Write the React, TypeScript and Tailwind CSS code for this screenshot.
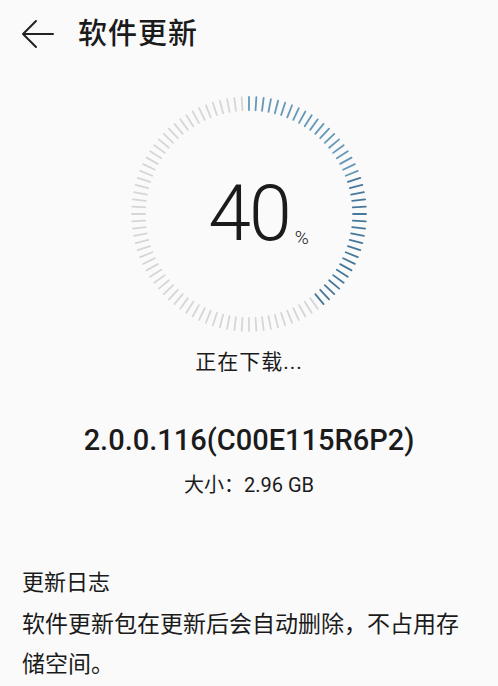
const TICKS = 100;
const PROGRESS = 40;

function BackArrow() {
  return (
    <svg width={34} height={32} viewBox="0 0 34 32" fill="none" className="block">
      <path d="M2 16H32M15 3L2 16L15 29" stroke="#222" strokeWidth={2} strokeLinecap="round" strokeLinejoin="round" />
    </svg>
  );
}

function ProgressRing({ value }: { value: number }) {
  const cx = 120;
  const cy = 120;
  const rOuter = 117;
  const rInner = 104;
  const done = Math.round((value / 100) * TICKS);

  return (
    <svg width={240} height={240} viewBox="0 0 240 240" className="block">
      {Array.from({ length: TICKS }).map((_, i) => {
        const a = (i / TICKS) * Math.PI * 2;
        const sx = Math.sin(a);
        const sy = -Math.cos(a);
        const active = i < done;
        // blue ticks get a bit darker toward the end of the arc
        const t = done > 1 ? i / (done - 1) : 0;
        const stroke = active ? (t < 0.5 ? '#6598b7' : '#46789a') : '#d6d6d6';
        return (
          <line
            key={i}
            x1={cx + sx * rInner}
            y1={cy + sy * rInner}
            x2={cx + sx * rOuter}
            y2={cy + sy * rOuter}
            stroke={stroke}
            strokeWidth={1.8}
            strokeLinecap="round"
          />
        );
      })}
    </svg>
  );
}

export default function App() {
  return (
    <div
      className="w-[498px] h-[686px] overflow-hidden bg-[#fafafa] text-[#1b1b1b]"
      style={{ fontFamily: 'Roboto, "Noto Sans CJK SC", sans-serif' }}
    >
      {/* Header */}
      <div className="flex items-center h-[68px] pl-[21px]">
        <BackArrow />
        <h1 className="ml-[23px] text-[29px] font-medium leading-none tracking-[1px]">软件更新</h1>
      </div>

      {/* Progress ring */}
      <div className="flex justify-center mt-[26px]">
        <div className="relative w-[240px] h-[240px]">
          <ProgressRing value={PROGRESS} />
          <div className="absolute inset-0 flex items-center justify-center">
            <div className="relative">
              <span className="text-[77px] font-light leading-none tracking-[-2px]">{PROGRESS}</span>
              <span className="absolute left-full bottom-[6px] ml-[5px] text-[19px] font-light leading-none">%</span>
            </div>
          </div>
        </div>
      </div>

      <div className="mt-[18px] text-center text-[21px] leading-none tracking-[1px]">正在下载...</div>

      <div className="mt-[53px] text-center text-[29px] font-medium leading-none">2.0.0.116(C00E115R6P2)</div>

      <div className="mt-[20px] text-center text-[20px] leading-none">大小：2.96 GB</div>

      {/* Changelog */}
      <div className="px-[22px] mt-[77px]">
        <div className="text-[22px] leading-none">更新日志</div>
        <p className="mt-[11px] text-[23px] leading-[40px]">
          软件更新包在更新后会自动删除，不占用存储空间。
        </p>
      </div>
    </div>
  );
}
